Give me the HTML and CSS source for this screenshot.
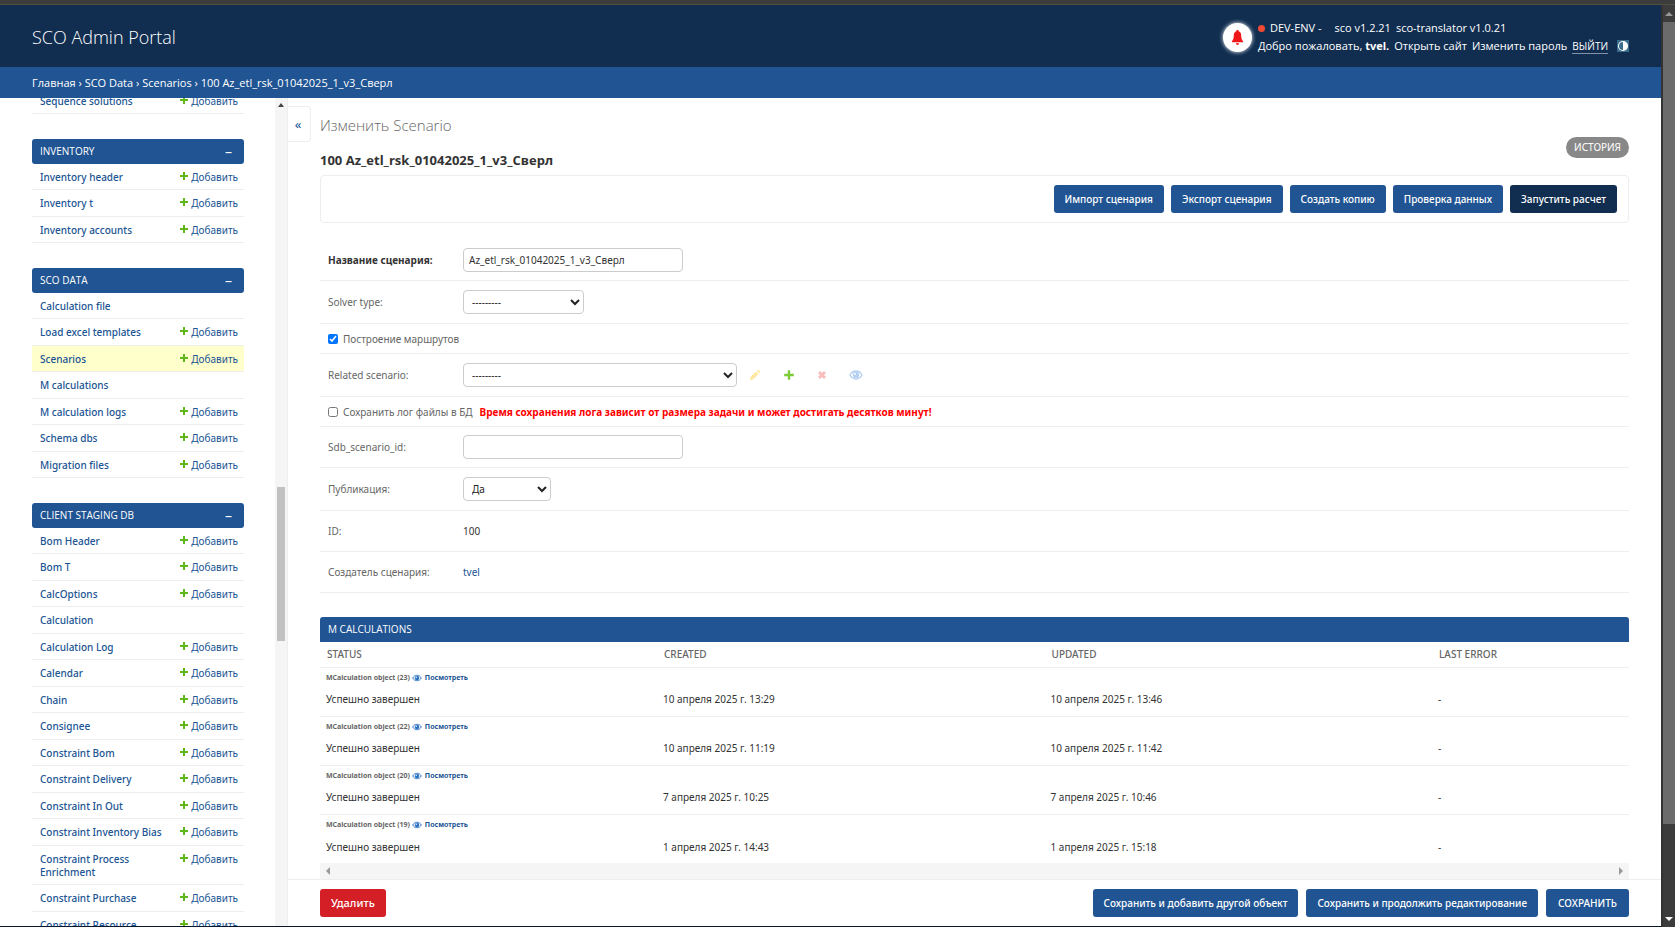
FILE: index.html
```html
<!DOCTYPE html>
<html lang="ru">
<head>
<meta charset="utf-8">
<title>Изменить Scenario | SCO Admin Portal</title>
<link rel="stylesheet" href="styles.css">
</head>
<body>
<svg class="defs" aria-hidden="true">
  <symbol id="plus" viewBox="0 0 10 10"><path d="M4 1h2v3h3v2H6v3H4V6H1V4h3z"/></symbol>
  <symbol id="eye" viewBox="0 0 14 10"><path d="M7 1C4 1 2 3 1 5c1 2 3 4 6 4s5-2 6-4c-1-2-3-4-6-4z" fill="none" stroke="currentColor" stroke-width="1.300"/><circle cx="7" cy="5" r="3.200" fill="currentColor"/><circle cx="6" cy="4" r="1" fill="#fff"/></symbol>
</svg>
<div class="topstrip"></div>
<div class="window">
  <div class="app">
    <header class="header">
      <a class="brand" href="#">SCO Admin Portal</a>
      <div class="tools">
        <button class="bell" aria-label="Уведомления"><svg viewBox="0 0 14 18"><path d="M7 1c-1 0-1.300.6-1.300 1.300C3.500 3 3 5 3 7c0 3-.8 4.500-2 6v1h12v-1c-1.200-1.500-2-3-2-6 0-2-.5-4-2.700-4.700C8.300 1.600 8 1 7 1zM5.200 15.200h3.600C8.600 16.500 8 17 7 17s-1.600-.5-1.800-1.800z"/></svg></button>
        <div class="user">
          <div class="line"><i class="dot"></i><span>DEV-ENV -</span><span class="ver">sco v1.2.21</span><span>sco-translator v1.0.21</span></div>
          <div class="line links"><span>Добро пожаловать, <b>tvel.</b></span><a href="#">Открыть сайт</a><a href="#">Изменить пароль</a><a class="logout" href="#">ВЫЙТИ</a><button class="theme" aria-label="Тема"><svg viewBox="0 0 12 12"><circle cx="6" cy="6" r="5" fill="#fff"/><path d="M6 2a4 4 0 0 0 0 8z" fill="#3a6d8c"/></svg></button></div>
        </div>
      </div>
    </header>
    <nav class="crumbs"><a href="#">Главная</a> › <a href="#">SCO Data</a> › <a href="#">Scenarios</a> › 100 Az_etl_rsk_01042025_1_v3_Сверл</nav>
    <div class="body">
      <nav class="side">
        <div class="lists">
          <ul>
            <li><a href="#">Sequence solutions</a><a class="add" href="#"><svg><use href="#plus"/></svg>Добавить</a></li>
          </ul>
          <h2>INVENTORY<button aria-label="Свернуть">–</button></h2>
          <ul>
            <li><a href="#">Inventory header</a><a class="add" href="#"><svg><use href="#plus"/></svg>Добавить</a></li>
            <li><a href="#">Inventory t</a><a class="add" href="#"><svg><use href="#plus"/></svg>Добавить</a></li>
            <li><a href="#">Inventory accounts</a><a class="add" href="#"><svg><use href="#plus"/></svg>Добавить</a></li>
          </ul>
          <h2>SCO DATA<button aria-label="Свернуть">–</button></h2>
          <ul>
            <li><a href="#">Calculation file</a></li>
            <li><a href="#">Load excel templates</a><a class="add" href="#"><svg><use href="#plus"/></svg>Добавить</a></li>
            <li class="current"><a href="#">Scenarios</a><a class="add" href="#"><svg><use href="#plus"/></svg>Добавить</a></li>
            <li><a href="#">M calculations</a></li>
            <li><a href="#">M calculation logs</a><a class="add" href="#"><svg><use href="#plus"/></svg>Добавить</a></li>
            <li><a href="#">Schema dbs</a><a class="add" href="#"><svg><use href="#plus"/></svg>Добавить</a></li>
            <li><a href="#">Migration files</a><a class="add" href="#"><svg><use href="#plus"/></svg>Добавить</a></li>
          </ul>
          <h2>CLIENT STAGING DB<button aria-label="Свернуть">–</button></h2>
          <ul>
            <li><a href="#">Bom Header</a><a class="add" href="#"><svg><use href="#plus"/></svg>Добавить</a></li>
            <li><a href="#">Bom T</a><a class="add" href="#"><svg><use href="#plus"/></svg>Добавить</a></li>
            <li><a href="#">CalcOptions</a><a class="add" href="#"><svg><use href="#plus"/></svg>Добавить</a></li>
            <li><a href="#">Calculation</a></li>
            <li><a href="#">Calculation Log</a><a class="add" href="#"><svg><use href="#plus"/></svg>Добавить</a></li>
            <li><a href="#">Calendar</a><a class="add" href="#"><svg><use href="#plus"/></svg>Добавить</a></li>
            <li><a href="#">Chain</a><a class="add" href="#"><svg><use href="#plus"/></svg>Добавить</a></li>
            <li><a href="#">Consignee</a><a class="add" href="#"><svg><use href="#plus"/></svg>Добавить</a></li>
            <li><a href="#">Constraint Bom</a><a class="add" href="#"><svg><use href="#plus"/></svg>Добавить</a></li>
            <li><a href="#">Constraint Delivery</a><a class="add" href="#"><svg><use href="#plus"/></svg>Добавить</a></li>
            <li><a href="#">Constraint In Out</a><a class="add" href="#"><svg><use href="#plus"/></svg>Добавить</a></li>
            <li><a href="#">Constraint Inventory Bias</a><a class="add" href="#"><svg><use href="#plus"/></svg>Добавить</a></li>
            <li><a href="#">Constraint Process Enrichment</a><a class="add" href="#"><svg><use href="#plus"/></svg>Добавить</a></li>
            <li><a href="#">Constraint Purchase</a><a class="add" href="#"><svg><use href="#plus"/></svg>Добавить</a></li>
            <li><a href="#">Constraint Resource</a><a class="add" href="#"><svg><use href="#plus"/></svg>Добавить</a></li>
          </ul>
        </div>
        <div class="sidebar-scroll"><i class="up"></i><i class="thumb"></i></div>
      </nav>
      <button class="toggle" aria-label="Переключить навигацию">«</button>
      <main class="main">
        <div class="content">
          <h1>Изменить Scenario</h1>
          <div class="titlerow"><h3>100 Az_etl_rsk_01042025_1_v3_Сверл</h3><a class="history" href="#">ИСТОРИЯ</a></div>
          <div class="actions">
            <button class="btn">Импорт сценария</button>
            <button class="btn">Экспорт сценария</button>
            <button class="btn">Создать копию</button>
            <button class="btn">Проверка данных</button>
            <button class="btn dark">Запустить расчет</button>
          </div>
          <form class="form">
            <div class="row"><label class="req" for="name">Название сценария:</label><input class="text" id="name" type="text" value="Az_etl_rsk_01042025_1_v3_Сверл"></div>
            <div class="row tall"><label for="solver">Solver type:</label><select class="w-m" id="solver"><option>---------</option></select></div>
            <div class="row check"><input type="checkbox" id="routes" checked><label for="routes">Построение маршрутов</label></div>
            <div class="row tall"><label for="related">Related scenario:</label><select class="w-l" id="related"><option>---------</option></select>
              <div class="rel">
                <svg viewBox="0 0 14 14" class="pencil"><path d="M1 13l1-4 6-6 3 3-6 6zM9 2l1-1h1l2 2v1l-1 1z"/></svg>
                <svg viewBox="0 0 10 10" class="plus"><use href="#plus"/></svg>
                <svg viewBox="0 0 10 10" class="cross"><path d="M1 3l2-2 2 2 2-2 2 2-2 2 2 2-2 2-2-2-2 2-2-2 2-2z"/></svg>
                <svg viewBox="0 0 14 10" class="view"><use href="#eye"/></svg>
              </div>
            </div>
            <div class="row check"><input type="checkbox" id="log"><label for="log">Сохранить лог файлы в БД</label><strong class="warn">Время сохранения лога зависит от размера задачи и может достигать десятков минут!</strong></div>
            <div class="row"><label for="sdb">Sdb_scenario_id:</label><input class="text" id="sdb" type="text"></div>
            <div class="row tall"><label for="pub">Публикация:</label><select class="w-s" id="pub"><option>Да</option></select></div>
            <div class="row"><span class="label">ID:</span><span class="value">100</span></div>
            <div class="row"><span class="label">Создатель сценария:</span><a href="#">tvel</a></div>
          </form>
          <section class="inline">
            <h2>M CALCULATIONS</h2>
            <table>
              <thead><tr><th class="first">STATUS</th><th>CREATED</th><th>UPDATED</th><th class="last">LAST ERROR</th></tr></thead>
              <tbody>
                <tr class="obj"><td colspan="4">MCalculation object (23) <a href="#"><svg viewBox="0 0 14 10"><use href="#eye"/></svg>Посмотреть</a></td></tr>
                <tr class="data"><td>Успешно завершен</td><td>10 апреля 2025 г. 13:29</td><td>10 апреля 2025 г. 13:46</td><td>-</td></tr>
                <tr class="obj"><td colspan="4">MCalculation object (22) <a href="#"><svg viewBox="0 0 14 10"><use href="#eye"/></svg>Посмотреть</a></td></tr>
                <tr class="data"><td>Успешно завершен</td><td>10 апреля 2025 г. 11:19</td><td>10 апреля 2025 г. 11:42</td><td>-</td></tr>
                <tr class="obj"><td colspan="4">MCalculation object (20) <a href="#"><svg viewBox="0 0 14 10"><use href="#eye"/></svg>Посмотреть</a></td></tr>
                <tr class="data"><td>Успешно завершен</td><td>7 апреля 2025 г. 10:25</td><td>7 апреля 2025 г. 10:46</td><td>-</td></tr>
                <tr class="obj"><td colspan="4">MCalculation object (19) <a href="#"><svg viewBox="0 0 14 10"><use href="#eye"/></svg>Посмотреть</a></td></tr>
                <tr class="data"><td>Успешно завершен</td><td>1 апреля 2025 г. 14:43</td><td>1 апреля 2025 г. 15:18</td><td>-</td></tr>
              </tbody>
            </table>
            <div class="hscroll"><i class="left"></i><i class="right"></i></div>
          </section>
        </div>
        <footer class="submit">
          <button class="btn delete">Удалить</button>
          <button class="btn">Сохранить и добавить другой объект</button>
          <button class="btn">Сохранить и продолжить редактирование</button>
          <button class="btn save">СОХРАНИТЬ</button>
        </footer>
      </main>
    </div>
  </div>
  <div class="page-scroll"><i class="up"></i><i class="thumb"></i><i class="down"></i></div>
</div>
</body>
</html>
```
FILE: styles.css
```css
* { box-sizing: border-box; }
body { margin: 0; height: 100vh; padding-bottom: 2px; display: flex; flex-direction: column; background: #fff; color: #333; font: 10px/16px "Noto Sans", "Open Sans", sans-serif; overflow: hidden; }
h1, h2, h3, ul { margin: 0; padding: 0; }
a { color: #205493; text-decoration: none; }
button { font: inherit; border: 0; padding: 0; cursor: pointer; }
svg { display: block; fill: currentColor; }
.defs { position: absolute; width: 0; height: 0; }
.topstrip { height: 5px; flex: none; background: #3c3c3c; border-bottom: 1px solid #50503f; }
.window { flex: 1; min-height: 0; display: flex; }
.app { flex: 1; min-width: 0; display: flex; flex-direction: column; border-bottom: 1px solid #06172e; }

.header { flex: none; height: 62px; background: #112e51; color: #fff; display: flex; align-items: center; justify-content: space-between; padding: 2px 32px 0; }
.header a { color: #fff; }
.brand { font: 300 18px/24px "Open Sans", sans-serif; }
.tools { display: flex; align-items: center; gap: 6px; font: 11px/18px "Open Sans", sans-serif; }
.bell { width: 29px; height: 29px; border-radius: 50%; background: #fff; color: #f01818; display: grid; place-items: center; box-shadow: 0 0 4px #fff; }
.bell svg { width: 13px; height: 17px; }
.user { min-width: 0; }
.line { display: flex; align-items: center; gap: 5px; }
.dot { width: 7px; height: 7px; border-radius: 50%; background: #f04a35; }
.ver { margin-left: 8px; }
.logout { border-bottom: 1px solid #8292a8; font-size: 10px; line-height: 14px; }
.theme { width: 12px; height: 12px; margin-left: 4px; background: #3a6d8c; }

.crumbs { flex: none; height: 31px; background: #205493; color: #fff; padding: 0 32px; font: 11px/31px "Open Sans", sans-serif; }
.crumbs a { color: #fff; }

.body { flex: 1; min-height: 0; display: flex; }
.side { width: 288px; flex: none; display: flex; overflow: hidden; border-right: 1px solid #eee; }
.lists { flex: 1; padding-left: 32px; padding-right: 31px; margin-top: -10px; }
.lists ul { list-style: none; margin-bottom: 25px; }
.lists li { display: flex; justify-content: space-between; align-items: flex-start; border-bottom: 1px solid #eee; padding: 7px 6px 5px 8px; line-height: 13px; font-weight: 500; }
.lists li:nth-child(even) { padding-bottom: 6px; }
.lists li.current { background: #ffffcc; }
.lists a:first-child { max-width: 132px; }
.add { display: flex; gap: 2px; font-weight: 400; }
.add svg { width: 10px; height: 10px; color: #5fb81b; }
.lists h2 { display: flex; justify-content: space-between; background: #205493; color: #fff; border-radius: 3px; font: 10px/25px "Open Sans", sans-serif; padding: 0 12px 0 8px; }
.lists h2 button { background: none; color: #fff; font-size: 14px; }
.sidebar-scroll { width: 12px; background: #f5f5f5; display: flex; flex-direction: column; align-items: center; }
.sidebar-scroll .up { border: 3px solid transparent; border-top: 0; border-bottom: 4px solid #444; margin-top: 5px; }
.sidebar-scroll .thumb { width: 8px; height: 154px; margin-top: 380px; background: #c1c1c1; }
.toggle { width: 23px; height: 36px; margin-top: 8px; padding-right: 2px; background: #fff; border: 1px solid #eee; border-left: 0; border-radius: 0 4px 4px 0; color: #205493; font-size: 13px; flex: none; }

.main { flex: 1; min-width: 0; display: flex; flex-direction: column; margin-left: -23px; }
.content { flex: 1; padding: 16px 32px 0; }
h1 { font: 300 15px/22px "Open Sans", sans-serif; color: #666; }
.titlerow { display: flex; justify-content: space-between; align-items: center; height: 39px; }
h3 { font: 700 13px/18px "Open Sans", sans-serif; margin-top: 8px; }
.history { background: #888; color: #fff; border-radius: 11px; padding: 0 8px; line-height: 21px; margin-bottom: 16px; }
.actions { display: flex; justify-content: flex-end; gap: 7px; border: 1px solid #eee; border-radius: 4px; padding: 9px 11px; }
.btn { background: #205493; color: #fff; border-radius: 3px; line-height: 28px; padding: 0 11px; font-weight: 500; }
.btn.dark { background: #112e51; }
.form { margin-top: 17px; }
.row { display: flex; align-items: center; height: 41px; border-bottom: 1px solid #eee; padding-left: 8px; }
.row.tall { height: 43px; }
.row.check { height: 30px; gap: 5px; }
.row > label, .label { width: 135px; color: #666; }
.row.check > label { width: auto; }
.row > .req { font-weight: 700; color: #333; }
.row input[type=checkbox] { width: 10px; height: 10px; margin: 0; accent-color: #0075ff; }
.text, select { height: 24px; border: 1px solid #ccc; border-radius: 4px; background: #fff; font: inherit; color: #333; padding: 0 5px; }
select { padding: 0 4px; color: #222; }
.text { width: 220px; }
.w-s { width: 88px; }
.w-m { width: 121px; }
.w-l { width: 274px; }
.warn { color: #f00; margin-left: 2px; }
.rel { display: flex; align-items: center; margin-left: 12px; gap: 22px; }
.rel svg { width: 12px; height: 12px; }
.rel .pencil { color: #ffe9a0; }
.rel .plus { color: #7ecb3a; }
.rel .cross { color: #f8bcbc; width: 10px; }
.rel .view { color: #b5cff0; width: 14px; }

.inline { margin-top: 24px; }
.inline h2 { background: #205493; color: #fff; border-radius: 3px 3px 0 0; font: 10px/25px "Open Sans", sans-serif; padding-left: 8px; }
table { width: 100%; border-collapse: collapse; table-layout: fixed; }
th { text-align: left; font-weight: 500; color: #666; padding: 0 7px; height: 25px; border-bottom: 1px solid #eee; }
th.first { width: 337px; }
th.last { width: 197px; }
td { padding: 0 6px; color: #333; }
.obj td { font-size: 7px; font-weight: 700; height: 20px; padding-top: 2px; color: #666; }
.obj svg { display: inline-block; width: 10px; height: 8px; color: #2b72c4; margin-right: 3px; vertical-align: middle; }
.data td { height: 29px; border-bottom: 1px solid #eee; padding-bottom: 4px; }
.data:last-child td { border: 0; }
.hscroll { display: flex; justify-content: space-between; align-items: center; height: 16px; background: #f5f5f5; padding: 0 6px; }
.hscroll .left { border: 4px solid transparent; border-left: 0; border-right-color: #999; }
.hscroll .right { border: 4px solid transparent; border-right: 0; border-left-color: #999; }
.submit { flex: none; display: flex; gap: 8px; border-top: 1px solid #eee; padding: 9px 32px; }
.save { padding: 0 12px; }
.delete { background: #d41f26; margin-right: auto; font-size: 11px; }

.page-scroll { width: 14px; flex: none; display: flex; flex-direction: column; align-items: center; background: #3c3c3c; border-left: 2px solid #333; }
.page-scroll .up { border: 4px solid transparent; border-top: 0; border-bottom: 4px solid #999; margin: 7px 0 6px; }
.page-scroll .thumb { width: 100%; height: 87%; background: #6b6b6b; }
.page-scroll .down { margin-top: auto; margin-bottom: 6px; border: 4px solid transparent; border-bottom: 0; border-top: 4px solid #fff; }
```
